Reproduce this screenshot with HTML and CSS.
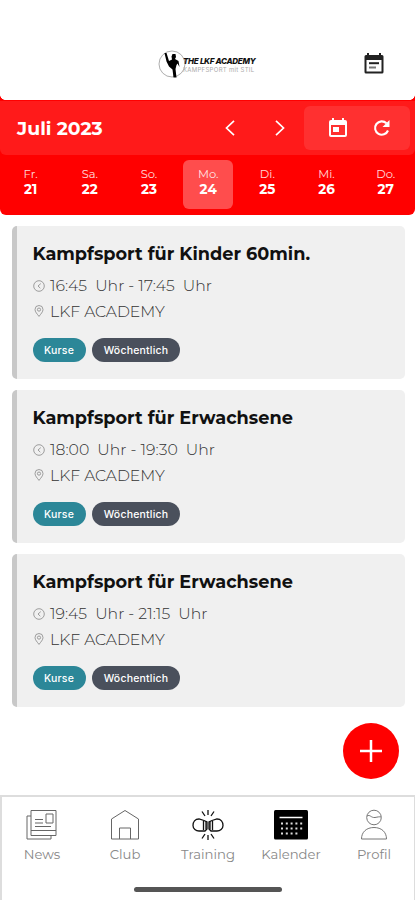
FILE: index.html
```html
<!DOCTYPE html>
<html lang="de">
<head>
<meta charset="utf-8">
<title>Kalender</title>
<link rel="stylesheet" href="styles.css">
</head>
<body>
<svg class="defs" width="0" height="0">
  <symbol id="clock" viewBox="0 0 12 12"><circle cx="6" cy="6" r="5.3"/><path d="M7.8 3.6 5 6l2.3 2.2"/></symbol>
  <symbol id="pin" viewBox="0 0 12 12"><path d="M6 11.4C4.2 9 2 6.800 2 4.500a4 4 0 0 1 8 0C10 6.800 7.800 9 6 11.400z"/><circle cx="6" cy="4.600" r="1.600"/></symbol>
</svg>
<header class="header">
  <div class="logo">
    <svg class="emblem" viewBox="0 0 30 30" width="30" height="30"><circle cx="14" cy="15" r="13" fill="none" stroke="#999" stroke-width=".8"/><path d="M6.500 4l2 0 2.500 8 3-1.500-.5-3 1-2.500h3l.5 3-1 2 3.500 2 1 6-2-3.500-1 1.500-1 4 1 8.500h-3l-1-8-3.500-3-2.500-5z" fill="#000"/></svg>
    <div class="wordmark"><b>THE LKF ACADEMY</b><span>KAMPFSPORT mit STIL</span></div>
  </div>
  <svg class="agenda" viewBox="0 0 22 24" width="22" height="24"><path d="M3 3h16a1.500 1.500 0 0 1 1.500 1.500v15.500a1.500 1.500 0 0 1-1.500 1.500H3a1.500 1.500 0 0 1-1.500-1.500V4.500A1.500 1.500 0 0 1 3 3zM3.500 8v11.500h15V8z" fill="#222" fill-rule="evenodd"/><path d="M5 1v3M17 1v3" stroke="#222" stroke-width="2"/><path d="M6 11.200h10" stroke="#222" stroke-width="2"/><path d="M6 15.500h7" stroke="#777" stroke-width="2"/></svg>
</header>
<section class="calendar">
  <div class="toolbar">
    <h1>Juli 2023</h1>
    <div class="arrows">
      <svg viewBox="0 0 10 16" width="10" height="16"><path d="M9 .8 1.500 8 9 15.200"/></svg>
      <svg viewBox="0 0 10 16" width="10" height="16"><path d="M1 .8 8.500 8 1 15.200"/></svg>
    </div>
    <div class="actions">
      <svg viewBox="0 0 18 20" width="18" height="20"><path d="M2 2h14a2 2 0 0 1 2 2v13a2 2 0 0 1-2 2H2a2 2 0 0 1-2-2V4a2 2 0 0 1 2-2zM2 7v10h14V7zM4 9h6v5H4z" fill="#fff" fill-rule="evenodd"/><path d="M4 0v4M14 0v4" stroke="#fff" stroke-width="2"/></svg>
      <svg viewBox="0 0 18 18" width="18" height="18"><path d="M15 11.500A6.700 6.700 0 1 1 13.500 4.300" fill="none" stroke="#fff" stroke-width="2.100"/><path d="M16.500 1v7h-7z" fill="#fff"/></svg>
    </div>
  </div>
  <div class="week">
    <div class="day"><span>Fr.</span><b>21</b></div>
    <div class="day"><span>Sa.</span><b>22</b></div>
    <div class="day"><span>So.</span><b>23</b></div>
    <div class="day selected"><span>Mo.</span><b>24</b></div>
    <div class="day"><span>Di.</span><b>25</b></div>
    <div class="day"><span>Mi.</span><b>26</b></div>
    <div class="day"><span>Do.</span><b>27</b></div>
  </div>
</section>
<main class="list">
  <article class="card">
    <h2>Kampfsport für Kinder 60min.</h2>
    <p class="time"><svg><use href="#clock"/></svg><span>16:45&nbsp; Uhr - 17:45&nbsp; Uhr</span></p>
    <p class="place"><svg><use href="#pin"/></svg><span>LKF ACADEMY</span></p>
    <div class="tags"><span class="tag course">Kurse</span><span class="tag weekly">Wöchentlich</span></div>
  </article>
  <article class="card">
    <h2>Kampfsport für Erwachsene</h2>
    <p class="time"><svg><use href="#clock"/></svg><span>18:00&nbsp; Uhr - 19:30&nbsp; Uhr</span></p>
    <p class="place"><svg><use href="#pin"/></svg><span>LKF ACADEMY</span></p>
    <div class="tags"><span class="tag course">Kurse</span><span class="tag weekly">Wöchentlich</span></div>
  </article>
  <article class="card">
    <h2>Kampfsport für Erwachsene</h2>
    <p class="time"><svg><use href="#clock"/></svg><span>19:45&nbsp; Uhr - 21:15&nbsp; Uhr</span></p>
    <p class="place"><svg><use href="#pin"/></svg><span>LKF ACADEMY</span></p>
    <div class="tags"><span class="tag course">Kurse</span><span class="tag weekly">Wöchentlich</span></div>
  </article>
</main>
<button class="add" aria-label="Hinzufügen"><svg viewBox="0 0 22 22" width="22" height="22"><path d="M11 0v22M0 11h22" stroke="#fff" stroke-width="2.500"/></svg></button>
<nav class="tabs">
  <div class="tab"><svg viewBox="0 0 34 32" width="34" height="32"><path d="M6 1.500h25v25H6zM6 7H2v23h24v-3.500M6 21.500h25M21 5h7v9h-7zM10 10.500h8M10 14h8M10 17.500h16" fill="none" stroke="#666"/></svg><span>News</span></div>
  <div class="tab"><svg viewBox="0 0 34 32" width="34" height="32"><path d="M3.500 30V10L17 1.500 30.500 10v20zM11.500 30V19h11v11" fill="none" stroke="#666"/></svg><span>Club</span></div>
  <div class="tab"><svg viewBox="0 0 34 32" width="34" height="32"><g fill="none" stroke="#111" stroke-width="1.300"><path d="M13 11.500 8 10C4 10 2 13 2 16.500S5 22 8 22h6l2-2v-7zM21 11.500l5-1.500c4 0 6 3 6 6.500S29 22 26 22h-6l-2-2v-7z"/><path d="M12.500 12v9M15 12.500v8M19 12.500v8M21.500 12v9"/><path d="M17 1v5M11 2.500l3 4.500M23 2.500l-3 4.500M17 31v-5M11 29.500l3-4.500M23 29.500l-3-4.500"/></g></svg><span>Training</span></div>
  <div class="tab"><svg viewBox="0 0 34 32" width="34" height="32"><rect x="0" y="1" width="34" height="29.500" rx="1.500" fill="#000"/><path d="M5.500 8.500h23" stroke="#fff" stroke-width="1.500"/><path d="M7 14.500h22M7 19.500h22M7 24.500h18" stroke="#ddd" stroke-width="2.200" stroke-dasharray="2 2.800"/></svg><span>Kalender</span></div>
  <div class="tab"><svg viewBox="0 0 34 32" width="34" height="32"><g fill="none" stroke="#777"><circle cx="17" cy="8.500" r="7.300"/><path d="M10 7c3-2 4 2 8 1.500 3-.5 4-1 6-.5M4.500 30c0-7 5-11.500 12.500-11.500S29.500 23 29.500 30z"/></g></svg><span>Profil</span></div>
  <i class="home"></i>
</nav>
</body>
</html>
```
FILE: styles.css
```css
* { box-sizing: border-box; margin: 0; padding: 0; }
body { width: 415px; height: 900px; overflow: hidden; background: #fff; font-family: Montserrat, Inter, sans-serif; display: flex; flex-direction: column; position: relative; }
.defs { position: absolute; }
.header { height: 100px; flex: none; display: flex; align-items: flex-start; padding: 49px 30px 0 158px; justify-content: space-between; background: radial-gradient(circle at 100% 0, transparent 4.500px, #f00 5px) 0 100% / 5px 5px no-repeat, radial-gradient(circle at 0 0, transparent 4.500px, #f00 5px) 100% 100% / 5px 5px no-repeat; }
.logo { display: flex; }
.wordmark { display: flex; flex-direction: column; padding-top: 8px; margin-left: -5px; white-space: nowrap; }
.wordmark b { font: italic 800 8px/9px Inter, sans-serif; letter-spacing: -.3px; color: #111; }
.wordmark span { font: 6px/7px Inter, sans-serif; color: #aaa; letter-spacing: .3px; }
.agenda { margin-top: 3px; }
.calendar { height: 115px; flex: none; background: #f00; border-radius: 0 0 6px 6px; }
.toolbar { height: 55px; background: #ff1a1a; border-radius: 0 0 6px 6px; border-top: 1px solid #f00; display: flex; align-items: center; padding: 0 5px 0 17px; }
.toolbar h1 { width: 208px; font-size: 18.800px; font-weight: 700; color: #fff; white-space: nowrap; }
.arrows { display: flex; gap: 40px; width: 79px; }
.arrows path { fill: none; stroke: #fff; stroke-width: 1.7; }
.actions { width: 106px; height: 44px; background: #ff3030; border-radius: 6px; display: flex; align-items: center; gap: 26px; padding-left: 25px; }
.week { height: 60px; display: grid; grid-template-columns: repeat(7, 59.2px); padding-left: 1px; padding-top: 5px; justify-content: start; }
.day { width: 50px; height: 49px; justify-self: center; border-radius: 6px; color: #fff; display: flex; flex-direction: column; align-items: center; padding-top: 7px; }
.day span { font-size: 11.500px; line-height: 14px; font-weight: 400; opacity: .85; }
.day b { font-size: 13.500px; line-height: 16px; }
.selected { background: #ff4d4d; }
.list { padding: 11px 10px 0 12px; display: flex; flex-direction: column; gap: 10.800px; }
.card { height: 153.200px; border-left: 5px solid #c8c8c8; border-radius: 5px; background: #f0f0f0; padding: 17px 0 0 15.500px; }
.card h2 { font-size: 17.700px; line-height: 22px; color: #111; white-space: nowrap; }
.card p { display: flex; align-items: center; gap: 5.500px; height: 25.500px; font-size: 15.700px; font-weight: 300; color: #333; white-space: nowrap; }
.card .time { margin-top: 8px; }
.card p svg { width: 12px; height: 12px; fill: none; stroke: #888; stroke-width: .8; }
.tags { display: flex; gap: 6.500px; margin-top: 14px; }
.tag { height: 24px; border-radius: 12px; color: #fff; font: 500 10.500px/25px Inter, sans-serif; text-align: center; letter-spacing: .2px; }
.course { width: 53px; background: #2c8798; }
.weekly { width: 88px; background: #4a505c; }
.add { position: absolute; left: 343px; top: 723px; width: 56px; height: 56px; border: 0; border-radius: 50%; background: #f00; display: flex; align-items: center; justify-content: center; }
.tabs { position: relative; margin-top: auto; height: 105px; flex: none; border: 2px solid #ddd; border-bottom: 0; border-right-width: 1px; display: grid; grid-template-columns: repeat(5, 83px); justify-content: center; padding-top: 12px; background: #fff; }
.tab { display: flex; flex-direction: column; align-items: center; font-size: 13.200px; line-height: 18px; color: #888; gap: 4px; }
.home { position: absolute; left: 132px; top: 90px; width: 148px; height: 5px; border-radius: 3px; background: #555; }
```
